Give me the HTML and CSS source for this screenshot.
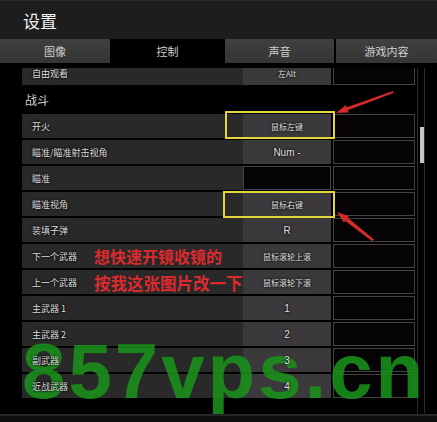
FILE: index.html
```html
<!DOCTYPE html>
<html lang="zh-CN">
<head>
<meta charset="utf-8">
<title>设置</title>
<link rel="stylesheet" href="styles.css">
</head>
<body>
<div class="app">
  <header class="titlebar"><h1 class="title">设置</h1></header>
  <nav class="tabs">
    <div class="tab">图像</div>
    <div class="tab active">控制</div>
    <div class="tab">声音</div>
    <div class="tab">游戏内容</div>
  </nav>
  <div class="panel">
    <div class="list">
      <div class="row first"><div class="label"><span class="t">自由观看</span></div><div class="key"><span class="t">左Alt</span></div><div class="key empty"></div></div>
      <div class="heading">战斗</div>
      <div class="row"><div class="label"><span class="t">开火</span></div><div class="key"><span class="t">鼠标左键</span></div><div class="key empty"></div></div>
      <div class="row"><div class="label"><span class="t">瞄准/瞄准射击视角</span></div><div class="key latin"><span class="t">Num -</span></div><div class="key empty"></div></div>
      <div class="row"><div class="label"><span class="t">瞄准</span></div><div class="key empty"></div><div class="key empty"></div></div>
      <div class="row"><div class="label"><span class="t">瞄准视角</span></div><div class="key"><span class="t">鼠标右键</span></div><div class="key empty"></div></div>
      <div class="row"><div class="label"><span class="t">装填子弹</span></div><div class="key latin"><span class="t">R</span></div><div class="key empty"></div></div>
      <div class="row"><div class="label"><span class="t">下一个武器</span></div><div class="key"><span class="t">鼠标滚轮上滚</span></div><div class="key empty"></div></div>
      <div class="row"><div class="label"><span class="t">上一个武器</span></div><div class="key"><span class="t">鼠标滚轮下滚</span></div><div class="key empty"></div></div>
      <div class="row"><div class="label"><span class="t">主武器 1</span></div><div class="key latin"><span class="t">1</span></div><div class="key empty"></div></div>
      <div class="row"><div class="label"><span class="t">主武器 2</span></div><div class="key latin"><span class="t">2</span></div><div class="key empty"></div></div>
      <div class="row"><div class="label"><span class="t">副武器</span></div><div class="key latin"><span class="t">3</span></div><div class="key empty"></div></div>
      <div class="row"><div class="label"><span class="t">近战武器</span></div><div class="key latin"><span class="t">4</span></div><div class="key empty"></div></div>
    </div>
    <div class="scroll"><div class="rail"><div class="thumb"></div></div></div>
  </div>

  <div class="watermark">857vps.cn</div>
  <div class="highlight box1"></div>
  <div class="highlight box2"></div>
  <svg class="arrows" width="437" height="422" viewBox="0 0 437 422">
    <polygon points="393,91 393.6,93 347,110.5 346.2,107.4" fill="#d42a2a"/>
    <polygon points="336,113 345.9,105 348.7,112.5" fill="#d42a2a"/>
    <polygon points="372,241 374,239.4 347.8,217.8 345.3,221.1" fill="#d42a2a"/>
    <polygon points="337,212 348.9,216.2 344,222.6" fill="#d42a2a"/>
  </svg>
  <div class="note">
    <div class="l1">想快速开镜收镜的</div>
    <div class="l2">按我这张图片改一下</div>
  </div>
</div>
</body>
</html>
```

FILE: styles.css
```css
* { box-sizing: border-box; }
html, body { margin: 0; padding: 0; }
body {
  background: #0e0e0e;
  font-family: "Liberation Sans", "Noto Sans CJK SC", sans-serif;
  color: #dcdcdc;
}
.app {
  position: relative;
  width: 437px;
  height: 422px;
  overflow: hidden;
}
.titlebar {
  height: 39px;
  background: #1d1d1d;
  border-top: 1px solid #2a2a2a;
  padding-left: 23px;
  display: flex;
  align-items: center;
}
.title {
  margin: 0;
  font-size: 17px;
  font-weight: normal;
  color: #f2f2f2;
  font-family: "Noto Sans CJK SC", sans-serif;
}
.tabs {
  display: grid;
  grid-template-columns: 110px 111px 109px 1fr;
  column-gap: 2px;
  height: 24px;
  background: #000;
}
.tab {
  background: linear-gradient(#404040, #353535);
  color: #cfcfcf;
  font-size: 11px;
  font-family: "Noto Sans CJK SC", sans-serif;
  display: flex;
  align-items: center;
  justify-content: center;
}
.tab.active { background: #000; }

.panel {
  display: flex;
  background: #000;
  padding-top: 5px;
  height: 353px;
  border-bottom: 2px solid #262626;
}
.list {
  margin-left: 22px;
  width: 395px;
  overflow: hidden;
  display: flex;
  flex-direction: column;
  gap: 2px;
}
.row {
  flex: 0 0 24px;
  display: grid;
  grid-template-columns: 221px 88px 84px;
  column-gap: 0;
}
.row.first { margin-top: -7px; }
.label {
  background: #2a292a;
  display: flex;
  align-items: center;
  padding-left: 10px;
  font-size: 9px;
  font-family: "Noto Sans CJK SC", sans-serif;
  color: #dedede;
}
.key {
  background: #3b393b;
  display: flex;
  align-items: center;
  justify-content: center;
  font-size: 8px;
  font-family: "Noto Sans CJK SC", sans-serif;
  color: #e0e0e0;
}
.key.latin { font-family: "Liberation Sans", sans-serif; font-size: 10px; }
.key.empty {
  background: #050305;
  border: 1px solid #444;
}
.row > .key:nth-child(3) { margin-left: 2px; }
.t {
  position: relative;
  z-index: 2;
  text-shadow: 0 0 2px #000, 0 0 3px rgba(0,0,0,0.8);
}
.heading {
  flex: 0 0 25px;
  display: flex;
  align-items: center;
  padding-left: 3px;
  font-size: 12px;
  color: #cfcfcf;
  font-family: "Noto Sans CJK SC", serif;
}
.scroll {
  width: 20px;
  border-left: 1px solid #2c2c2c;
  display: flex;
  padding-left: 2px;
}
.rail {
  width: 5px;
  height: 345px;
  border-right: 1px solid #2e2e2e;
}
.thumb {
  margin-top: 59px;
  width: 4px;
  height: 36px;
  background: #c4c4c4;
}

.watermark {
  position: absolute;
  left: 22px;
  top: 332px;
  font-family: "Liberation Sans", sans-serif;
  font-weight: bold;
  font-size: 78px;
  line-height: 78px;
  letter-spacing: 3px;
  color: rgba(26, 145, 26, 0.88);
  z-index: 1;
  white-space: nowrap;
}
.highlight {
  position: absolute;
  border: 2px solid #e6d43c;
  z-index: 3;
}
.box1 { left: 225px; top: 111px; width: 110px; height: 28px; }
.box2 { left: 223px; top: 191px; width: 112px; height: 27px; }
.arrows {
  position: absolute;
  left: 0;
  top: 0;
  z-index: 3;
}
.note {
  position: absolute;
  left: 94px;
  top: 243px;
  z-index: 3;
  font-family: "Noto Sans CJK SC", sans-serif;
  font-weight: bold;
  color: #dc2a2e;
  line-height: 27px;
  white-space: nowrap;
}
.l1 { font-size: 16px; }
.l2 { font-size: 16.5px; }
```
